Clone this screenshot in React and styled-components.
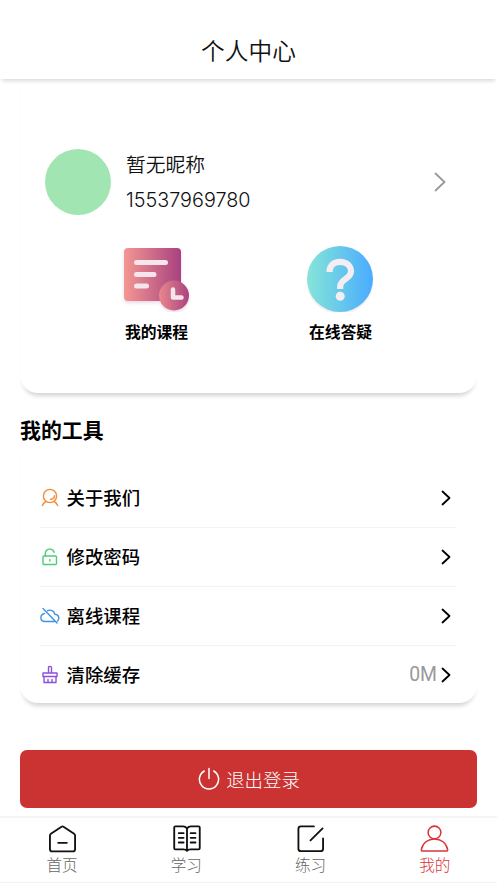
import React from "react";
import styled, { createGlobalStyle } from "styled-components";

const GlobalStyle = createGlobalStyle`
  * {
    box-sizing: border-box;
  }

  body {
    margin: 0;
    background: #fff;
    color: #111;
    font-family: Inter, "Noto Sans CJK SC", sans-serif;
    font-weight: 300;
  }
`;

const Page = styled.div`
  display: flex;
  flex-direction: column;
  width: 100%;
  height: 883px;
  overflow: hidden;
`;

const Header = styled.header`
  display: flex;
  align-items: flex-end;
  justify-content: center;
  height: 79px;
  flex-shrink: 0;
  padding-bottom: 11px;
  box-shadow: 0 4px 4px -2px rgba(0, 0, 0, 0.15);
`;

const Title = styled.h1`
  margin: 0;
  font-size: 23.7px;
  font-weight: 350;
  line-height: 32px;
`;

const Card = styled.section`
  margin: 0 20px;
  border-radius: 0 0 18px 18px;
  box-shadow: 0 6px 4px -3px rgba(0, 0, 0, 0.17);
`;

const ProfileCard = styled(Card)`
  height: 314px;
  padding-top: 70px;
`;

const Profile = styled.div`
  display: flex;
  align-items: center;
  height: 66px;
  padding: 0 31px 0 25px;
`;

const Avatar = styled.div`
  width: 66px;
  height: 66px;
  margin-right: 15px;
  border-radius: 50%;
  background: #a1e5b3;
`;

const UserInfo = styled.div`
  flex: 1;
`;

const Nickname = styled.div`
  padding-top: 1px;
  font-size: 19.8px;
  font-weight: 350;
  line-height: 36px;
`;

const Phone = styled.div`
  font-size: 19.8px;
  line-height: 35px;
`;

const Shortcuts = styled.div`
  display: grid;
  grid-template-columns: 184px 184px;
  justify-content: center;
  padding: 27px 0 0 0;
`;

const Shortcut = styled.div`
  display: flex;
  flex-direction: column;
  align-items: center;
  color: #000;
  font-size: 15.8px;
  font-weight: 700;
  line-height: 24px;

  svg {
    display: block;
    margin: 0 1px 9px 0;
  }
`;

const SectionTitle = styled.h2`
  margin: 21px 0 0 20px;
  color: #000;
  font-size: 20.9px;
  font-weight: 700;
  line-height: 33px;
`;

const ToolCard = styled(Card)`
  height: 256px;
  padding: 22px 21px 0 20px;
`;

const ToolRow = styled.div`
  display: flex;
  align-items: center;
  height: 59px;
  border-bottom: 1px solid ${(p) => (p.$last ? "transparent" : "#f3f3f3")};
  padding-right: 5px;
`;

const ToolName = styled.span`
  flex: 1;
  margin: -3px 0 0 6.5px;
  font-size: 18.4px;
  font-weight: 500;
  color: #000;
`;

const ToolValue = styled.span`
  margin: -2px 4px 0 0;
  font-family: Roboto, sans-serif;
  font-size: 19.4px;
  font-weight: 400;
  color: #999;
`;

const LogoutButton = styled.button`
  display: flex;
  align-items: center;
  justify-content: center;
  gap: 6px;
  height: 58px;
  margin: 47px 20px 0;
  padding: 0 0 1px 1px;
  border: 0;
  border-radius: 7px;
  background: #cb3333;
  color: #fff;
  font-family: inherit;
  font-size: 18.4px;
  font-weight: 300;
`;

const TabBar = styled.nav`
  display: grid;
  grid-template-columns: repeat(4, 1fr);
  height: 67px;
  margin-top: 8px;
  border-top: 2px solid #f5f5f5;
  border-bottom: 1px solid #f3f3f3;
`;

const Tab = styled.div`
  display: flex;
  flex-direction: column;
  align-items: center;
  padding-top: 6px;
  color: ${(p) => (p.$active ? "#d9363b" : "#666")};
  font-size: 15.6px;
  line-height: 24px;

  svg {
    display: block;
    margin-bottom: 1px;
  }
`;

const Chevron = ({ large }) => (
  <svg
    width={large ? 12 : 10}
    height={large ? 20 : 16}
    viewBox={large ? "0 0 12 20" : "0 0 10 16"}
    fill='none'
    stroke={large ? "#999" : "#000"}
    strokeWidth='1.8'
    strokeLinecap='round'
    strokeLinejoin='round'
  >
    <path d={large ? "M1.5 1.5l9 8.5-9 8.5" : "M1.5 1.5L8.5 8l-7 6.5"} />
  </svg>
);

const CourseIcon = () => (
  <svg width='72' height='70' viewBox='0 0 72 70'>
    <defs>
      <linearGradient id='course'>
        <stop offset='0' stopColor='#f39792' />
        <stop offset='1' stopColor='#a94180' />
      </linearGradient>
      <linearGradient id='clock'>
        <stop offset='0' stopColor='#e8878c' />
        <stop offset='1' stopColor='#aa437f' />
      </linearGradient>
      <filter id='soft' x='-20%' y='-20%' width='140%' height='150%'>
        <feDropShadow dx='0' dy='2' stdDeviation='1.5' floodColor='#a94180' floodOpacity='.2' />
      </filter>
    </defs>
    <g filter='url(#soft)'>
      <rect x='4' y='6' width='57' height='53' rx='4' fill='url(#course)' />
      <circle cx='54' cy='53.5' r='15' fill='url(#clock)' />
    </g>
    <path
      d='M16.5 20.5h29M16.5 32.5h17.5M16.5 44h10'
      stroke='#f5e5ec'
      strokeWidth='5'
      strokeLinecap='round'
    />
    <path
      d='M53 47.5v8h8.5'
      fill='none'
      stroke='#f5e5ec'
      strokeWidth='4.5'
      strokeLinecap='round'
      strokeLinejoin='round'
    />
  </svg>
);

const QuestionIcon = () => (
  <svg width='72' height='70' viewBox='0 0 72 70'>
    <defs>
      <linearGradient id='question'>
        <stop offset='0' stopColor='#86e5d8' />
        <stop offset='1' stopColor='#49acff' />
      </linearGradient>
      <radialGradient id='glow'>
        <stop offset='.85' stopColor='#e8dde2' />
        <stop offset='1' stopColor='#fff' />
      </radialGradient>
    </defs>
    <ellipse cx='36' cy='41' rx='34' ry='32' fill='url(#glow)' />
    <circle cx='36' cy='37' r='33' fill='url(#question)' />
    <path
      d='M25.5 30c0-6.200 4.200-10.200 10.500-10.200 6.700 0 11 4 11 9.800 0 7.200-10.800 7.700-10.800 14.700V47'
      fill='none'
      stroke='#f4edf1'
      strokeWidth='6.2'
    />
    <circle cx='36.2' cy='54.3' r='4.5' fill='#f4edf1' />
  </svg>
);

const LineIcon = ({ color, children }) => (
  <svg
    width='20'
    height='20'
    viewBox='0 0 20 20'
    fill='none'
    stroke={color}
    strokeWidth='1.4'
    strokeLinecap='round'
    strokeLinejoin='round'
  >
    {children}
  </svg>
);

const tools = [
  {
    name: "关于我们",
    icon: (
      <LineIcon color='#f28c3c'>
        <circle cx='10' cy='8' r='6.6' />
        <path d='M10.5 11.2c2 0 3.700-1.300 4-3.400M6 13.500c-1.800.8-3 2.200-3.700 4M14 13.500c1.800.8 3 2.200 3.700 4' />
      </LineIcon>
    ),
  },
  {
    name: "修改密码",
    icon: (
      <LineIcon color='#4fcb79'>
        <rect x='3' y='9' width='13.5' height='8.5' rx='1' />
        <path d='M5.300 9V6.500a4.500 4.500 0 0 1 8.800-1.200M9.800 12.500v1.500' />
      </LineIcon>
    ),
  },
  {
    name: "离线课程",
    icon: (
      <LineIcon color='#3d93e6'>
        <path d='M4.500 7.500C2.300 8 .9 9.500.9 11.500c0 2.300 1.700 4 4 4h9.600M7.500 4.700c3.300-1.500 6.700.3 7.300 3.500 2.400.2 4 1.800 4 4 0 1.200-.5 2.200-1.400 2.800M3 2.500l14 14.500' />
      </LineIcon>
    ),
  },
  {
    name: "清除缓存",
    value: "0M",
    icon: (
      <LineIcon color='#8b50dc'>
        <path d='M8.500 8V2.500c0-1.500 3-1.500 3 0V8M3 8h14v3.500H3zM4 11.500v6h12v-6M8 14.500v3M12 14.500v3' />
      </LineIcon>
    ),
  },
];

const TabIcon = ({ width = 1.9, children }) => (
  <svg
    width='29'
    height='29'
    viewBox='0 0 30 30'
    fill='none'
    stroke='#111'
    strokeWidth={width}
    strokeLinecap='round'
    strokeLinejoin='round'
  >
    {children}
  </svg>
);

const tabs = [
  {
    name: "首页",
    icon: (
      <TabIcon>
        <path d='M2 12c0-1 .3-1.500 1-2L14 2.800c.7-.5 1.300-.5 2 0L27 10c.7.5 1 1 1 2v14c0 1.500-.8 2.300-2.300 2.300H4.300C2.800 28.300 2 27.500 2 26zM10.500 19.500h9' />
      </TabIcon>
    ),
  },
  {
    name: "学习",
    icon: (
      <TabIcon>
        <path d='M15.500 4.500c-1.200-1.500-2.500-2-4-2h-8c-.8 0-1.200.4-1.200 1.200V25c0 .8.400 1.200 1.200 1.200H12c1.500 0 2.700.5 3.500 1.600.8-1.100 2-1.600 3.500-1.600h8.500c.8 0 1.200-.4 1.200-1.200V3.700c0-.8-.4-1.200-1.200-1.200h-8c-1.500 0-2.800.5-4 2v22.500' />
        <path d='M7 9.500h5M7 14.300h5M7 19.100h5M19.300 9.500h5M19.300 14.300h5M19.300 19.100h5' />
      </TabIcon>
    ),
  },
  {
    name: "练习",
    icon: (
      <TabIcon>
        <path d='M18.500 2.500H5c-1.500 0-2.500 1-2.500 2.500v20.500c0 1.500 1 2.500 2.500 2.500h20.500c1.500 0 2.500-1 2.500-2.500V15M27.500 4.500L15 17' />
      </TabIcon>
    ),
  },
  {
    name: "我的",
    active: true,
    icon: (
      <TabIcon width={1.6}>
        <g stroke='#d9363b'>
          <circle cx='15' cy='8.8' r='6.6' />
          <path d='M1.400 26.500C2.600 19.500 8.300 15.500 15 15.500s12.400 4 13.600 11c.1 1-.4 1.500-1.300 1.500H2.700c-.9 0-1.400-.5-1.300-1.500z' />
        </g>
      </TabIcon>
    ),
  },
];

const App = () => (
  <>
    <GlobalStyle />
    <Page>
      <Header>
        <Title>个人中心</Title>
      </Header>

      <ProfileCard>
        <Profile>
          <Avatar />
          <UserInfo>
            <Nickname>暂无昵称</Nickname>
            <Phone>15537969780</Phone>
          </UserInfo>
          <Chevron large />
        </Profile>
        <Shortcuts>
          <Shortcut>
            <CourseIcon />
            我的课程
          </Shortcut>
          <Shortcut>
            <QuestionIcon />
            在线答疑
          </Shortcut>
        </Shortcuts>
      </ProfileCard>

      <SectionTitle>我的工具</SectionTitle>
      <ToolCard>
        {tools.map((tool, i) => (
          <ToolRow key={tool.name} $last={i === tools.length - 1}>
            {tool.icon}
            <ToolName>{tool.name}</ToolName>
            {tool.value && <ToolValue>{tool.value}</ToolValue>}
            <Chevron />
          </ToolRow>
        ))}
      </ToolCard>

      <LogoutButton>
        <svg
          width='22'
          height='24'
          viewBox='0 0 22 24'
          fill='none'
          stroke='#fff'
          strokeWidth='1.5'
          strokeLinecap='round'
        >
          <path d='M11 1.500v10M6.300 4a9.600 9.600 0 1 0 9.400 0' />
        </svg>
        退出登录
      </LogoutButton>

      <TabBar>
        {tabs.map((tab) => (
          <Tab key={tab.name} $active={tab.active}>
            {tab.icon}
            {tab.name}
          </Tab>
        ))}
      </TabBar>
    </Page>
  </>
);

export default App;
